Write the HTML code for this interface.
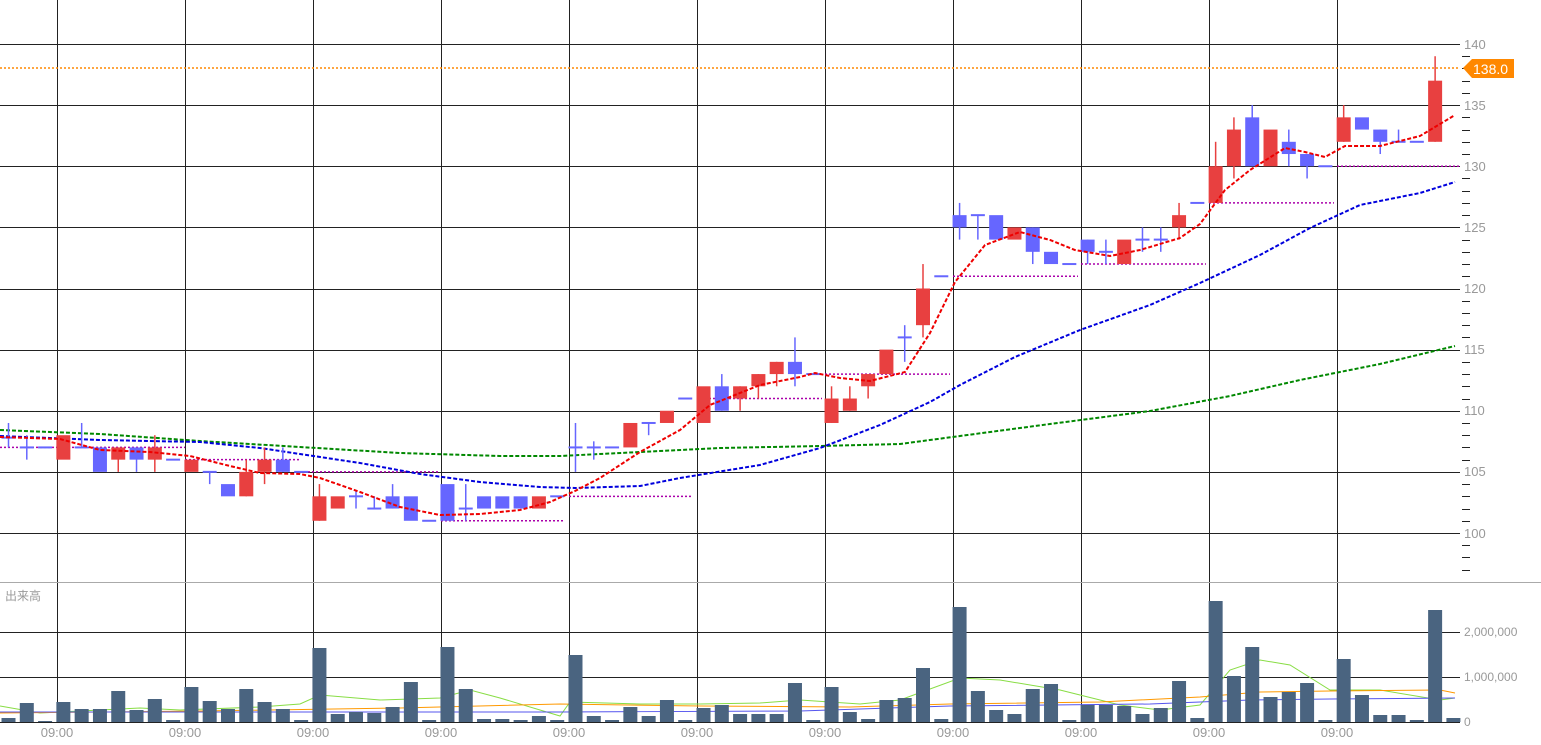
<!DOCTYPE html>
<html><head><meta charset="utf-8"><style>
html,body{margin:0;padding:0;background:#fff;width:1541px;height:745px;overflow:hidden}
svg{display:block;font-family:"Liberation Sans","Noto Sans CJK JP",sans-serif}
</style></head><body>
<svg id="s" width="1541" height="745" viewBox="0 0 1541 745">
<g id="grid"></g>
<g id="lines"></g>
<g id="cand"></g>
<g fill="#999" font-size="13">
<text x="1464" y="49">140</text><text x="1464" y="110">135</text><text x="1464" y="171">130</text>
<text x="1464" y="232">125</text><text x="1464" y="293">120</text><text x="1464" y="354">115</text>
<text x="1464" y="415">110</text><text x="1464" y="476">105</text><text x="1464" y="538">100</text>
</g>
<g fill="#999" font-size="12">
<text x="1464" y="636">2,000,000</text><text x="1464" y="681">1,000,000</text><text x="1464" y="726">0</text>
<text x="5" y="600" font-size="12">出来高</text>
</g>
<g fill="#999" font-size="13" text-anchor="middle">
<text x="57" y="737">09:00</text><text x="185" y="737">09:00</text><text x="313" y="737">09:00</text>
<text x="441" y="737">09:00</text><text x="569" y="737">09:00</text><text x="697" y="737">09:00</text>
<text x="825" y="737">09:00</text><text x="953" y="737">09:00</text><text x="1081" y="737">09:00</text>
<text x="1209" y="737">09:00</text><text x="1337" y="737">09:00</text>
</g>
<line x1="0" y1="68" x2="1460" y2="68" stroke="#f80" stroke-width="1.5" stroke-dasharray="2,2"/>
<polygon points="1463,68 1472,59 1514,59 1514,78 1472,78" fill="#f80"/>
<text x="1473" y="74" fill="#fff" font-size="14">138.0</text>
</svg>
<script>
var NS="http://www.w3.org/2000/svg";
function el(p,t,a){var e=document.createElementNS(NS,t);for(var k in a)e.setAttribute(k,a[k]);document.getElementById(p).appendChild(e);return e;}
function Y(p){return 44+(140-p)*12.225;}
[57,185,313,441,569,697,825,953,1081,1209,1337].forEach(function(x){el('grid','line',{x1:x+.5,y1:0,x2:x+.5,y2:722,stroke:'#222','stroke-width':1});});
for(var p=100;p<=140;p+=5){var y=Math.round(Y(p))+.5;el('grid','line',{x1:0,y1:y,x2:1460,y2:y,stroke:'#222','stroke-width':1});}
for(var p=96;p<=140;p++){if(p%5){var y=Math.round(Y(p))+.5;el('grid','line',{x1:1462,y1:y,x2:1470,y2:y,stroke:'#222'});}}
[632.5,677.5].forEach(function(y){el('grid','line',{x1:0,y1:y,x2:1460,y2:y,stroke:'#222'});});
el('grid','line',{x1:0,y1:582.5,x2:1541,y2:582.5,stroke:'#aaa'});
el('grid','line',{x1:0,y1:722.5,x2:1460,y2:722.5,stroke:'#222'});
[[0,185,107],[185,300,106],[300,440,105],[441,565,101],[569,693,103],[697,822,111],[825,950,113],[953,1078,121],[1081,1206,122],[1209,1334,127],[1337,1460,130]].forEach(function(s){var y=Y(s[2]);el('lines','line',{x1:s[0],y1:y,x2:s[1],y2:y,stroke:'#a0a','stroke-width':1.5,'stroke-dasharray':'2,2'});});
function pl(pts,c,w,d){el('lines','polyline',{points:pts,fill:'none',stroke:c,'stroke-width':w,'stroke-dasharray':d||''});}
pl("0,430 100,434 200,441 300,447 400,453 500,456 560,456 640,452 720,448 820,446 900,444 960,436 1050,424 1150,411 1230,396 1300,380 1380,364 1455,346","#080",2,"4,2");
pl("0,436 100,440 200,442 260,448 300,454 360,463 420,474 480,482 540,487 575,488 640,486 680,478 760,465 820,448 880,425 930,402 960,385 1015,357 1080,330 1150,305 1200,283 1260,255 1310,228 1360,205 1420,193 1455,182","#00d",2,"4,2");
var cd=[['d',107.8,107.8,109,107],['d',107,107,108,106],['d',107,107],['r',108,106],['d',107,107,109,107],['b',107,105],['r',107,106,107,105],['b',107,106,107,105],['r',107,106,108,105],['d',106,106],['r',106,105],['d',105,105,105,104],['b',104,103],['r',105,103,106,103],['r',106,105,107,104],['b',106,105,107,105],['d',105,105],['r',103,101,104,101],['r',103,102],['d',103,103,103.5,102],['d',102,102,103,102],['b',103,102,104,102],['b',103,101],['d',101,101],['b',104,101],['d',102,102,104,101],['b',103,102],['b',103,102],['b',103,102],['r',103,102],['d',103,103],['d',107,107,109,105],['d',107,107,107.5,106],['d',107,107],['r',109,107],['d',109,109,109,108],['r',110,109],['d',111,111],['r',112,109],['b',112,110,113,110],['r',112,111,112,110],['r',113,112,113,111],['r',114,113,114,112],['b',114,113,116,112],['d',113,113],['r',111,109,112,109],['r',111,110,112,110],['r',113,112,113,111],['r',115,113],['d',116,116,117,114],['r',120,117,122,116],['d',121,121],['b',126,125,127,124],['d',126,126,126,124],['b',126,124],['r',125,124],['b',125,123,125,122],['b',123,122],['d',122,122],['b',124,123,124,122],['d',123,123,124,122],['r',124,122],['d',124,124,125,123],['d',124,124,125,123],['r',126,125,127,124],['d',127,127],['r',130,127,132,127],['r',133,130,134,129],['b',134,130,135,130],['r',133,130],['b',132,131,133,130],['b',131,130,131,129],['d',130,130],['r',134,132,135,132],['b',134,133],['b',133,132,133,131],['d',132,132,133,132],['d',132,132],['r',137,132,139,132]];
var vol=[718,703,721,702,709,709,691,710,699,720,687,701,709,689,702,709,720,648,714,712,713,707,682,720,647,689,719,719,720,716,720,655,716,720,707,716,700,720,708,705,714,714,714,683,720,687,712,719,700,698,668,719,607,691,710,714,689,684,720,705,705,706,714,708,681,718,601,676,647,697,692,683,720,659,695,715,715,720,610,718];
for(var i=0;i<vol.length;i++){var x=8.5+i*18.29;el('cand','rect',{x:x-7,y:vol[i],width:14,height:722-vol[i],fill:'#4a6480'});}
pl("0,706 40,713 80,711 140,708 180,710 260,707 300,704 320,695 380,700 440,698 470,690 500,698 560,716 570,702 640,704 700,704 760,703 800,700 860,704 900,700 960,678 1000,680 1060,690 1120,705 1160,710 1200,705 1230,670 1260,660 1290,665 1330,690 1380,690 1440,700 1455,698","#8d4",1);
pl("0,713 200,711 400,708 560,704 700,706 850,707 950,704 1100,702 1200,697 1260,692 1330,691 1440,690 1455,693","#f90",1);
pl("0,712 300,712 560,712 800,711 950,706 1150,704 1250,700 1330,699 1455,698","#55e",1);
cd.forEach(function(c,i){var x=8.5+i*18.29;var col=c[0]=='r'?'#e84040':'#6666ff';
 var hi=c[3]!==undefined?c[3]:c[1],lo=c[4]!==undefined?c[4]:c[2];
 if(hi>c[1]||lo<c[2])el('cand','line',{x1:x,y1:Y(hi),x2:x,y2:Y(lo),stroke:col,'stroke-width':1.5});
 if(c[0]=='d')el('cand','line',{x1:x-7,y1:Y(c[1]),x2:x+7,y2:Y(c[1]),stroke:col,'stroke-width':2});
 else el('cand','rect',{x:x-7,y:Y(c[1]),width:14,height:Y(c[2])-Y(c[1]),fill:col});
});
el('cand','polyline',{points:"0,437 60,439 100,450 150,452 190,456 230,466 260,473 300,474 320,478 360,492 400,507 440,515 480,514 520,510 550,502 575,491 600,478 640,452 680,430 710,405 760,385 800,377 815,373 840,378 870,381 905,372 930,333 955,282 985,245 1020,232 1050,240 1075,250 1110,256 1140,250 1180,238 1200,224 1225,190 1250,170 1285,148 1305,152 1325,157 1345,146 1380,146 1420,136 1455,115",fill:'none',stroke:'#e00','stroke-width':2,'stroke-dasharray':'4,2'});
</script>
</body></html>
